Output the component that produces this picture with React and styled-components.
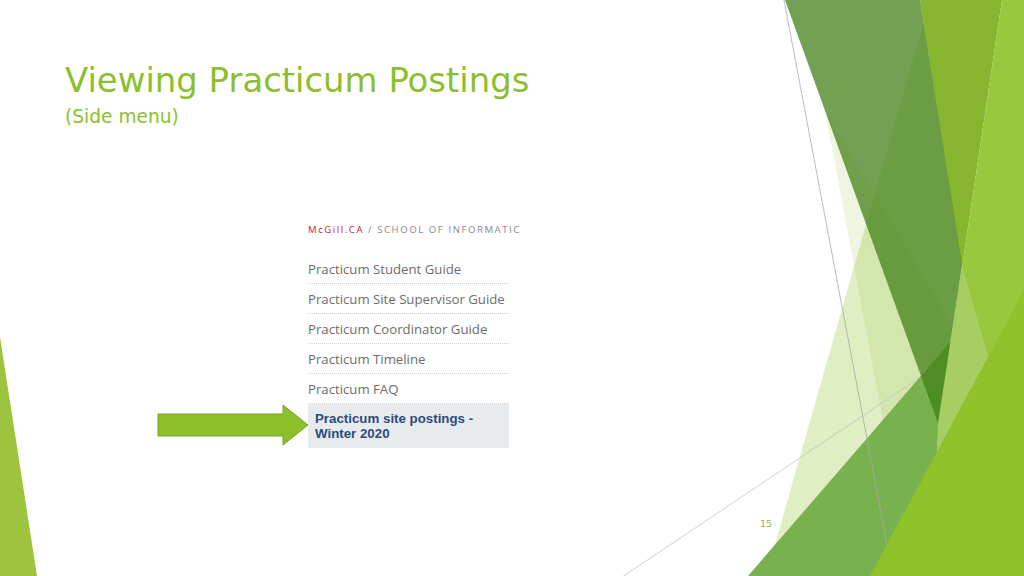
import React from "react";
import styled, { createGlobalStyle } from "styled-components";

const GlobalStyle = createGlobalStyle`
  html, body { margin: 0; padding: 0; background: #ffffff; }
  body { font-family: "DejaVu Sans", "Liberation Sans", sans-serif; }
`;

const Slide = styled.div`
  position: relative;
  width: 1024px;
  height: 576px;
  overflow: hidden;
  background: #ffffff;
  display: flex;
  flex-direction: column;
`;

const Backdrop = styled.svg`
  position: absolute;
  left: 0;
  top: 0;
  width: 1024px;
  height: 576px;
  z-index: 0;
  pointer-events: none;
`;

const Header = styled.header`
  position: relative;
  z-index: 1;
  padding: 61px 0 0 65px;
  color: #8cbf2f;
`;

const Title = styled.h1`
  margin: 0;
  font: 400 33.9px/40px "DejaVu Sans", sans-serif;
  white-space: nowrap;
`;

const Subtitle = styled.p`
  margin: 5px 0 0;
  font: 400 18.6px/22px "DejaVu Sans", sans-serif;
`;

const Figure = styled.div`
  position: relative;
  z-index: 1;
  display: flex;
  align-items: flex-end;
  padding-left: 157px;
  margin-top: 95px;
`;

const ArrowIcon = styled.svg`
  display: block;
  width: 152px;
  height: 42px;
  margin: 0 -1px 2px 0;
  flex: none;
`;

const Menu = styled.nav`
  width: 214px;
  font-family: "Open Sans", "DejaVu Sans", sans-serif;
`;

const Breadcrumb = styled.div`
  white-space: nowrap;
  font-size: 9.6px;
  line-height: 14px;
  letter-spacing: 1.55px;
  color: #8a8a8a;
  margin-bottom: 17px;
`;

const Home = styled.span`
  color: #c8202f;
`;

const List = styled.ul`
  list-style: none;
  margin: 0;
  padding: 0;
  width: 201px;
`;

const Item = styled.li`
  box-sizing: border-box;
  height: 30px;
  display: flex;
  align-items: center;
  font-size: 13.2px;
  line-height: 14px;
  color: #6d6d6d;
  border-bottom: 1px dotted #cfcfcf;
  white-space: nowrap;
`;

const ActiveItem = styled.li`
  display: flex;
  flex-direction: column;
  padding: 7px 7px 7px;
  background: #e8ebee;
  color: #2b4c7e;
  font-family: "Liberation Sans", "Open Sans", sans-serif;
  font-size: 13.3px;
  font-weight: 700;
  white-space: nowrap;
`;

const ActiveLine = styled.span`
  display: block;
  height: 15px;
  line-height: 15px;
`;

const PageNumber = styled.div`
  position: relative;
  z-index: 1;
  margin-top: auto;
  align-self: flex-end;
  margin-right: 252px;
  margin-bottom: 46px;
  font: 400 9.5px/12px "DejaVu Sans", sans-serif;
  color: #9fb23a;
`;

const items = [
  "Practicum Student Guide",
  "Practicum Site Supervisor Guide",
  "Practicum Coordinator Guide",
  "Practicum Timeline",
  "Practicum FAQ",
];

function Decoration() {
  return (
    <Backdrop viewBox="0 0 1024 576" aria-hidden="true">
      <polygon points="930,0 766,576 1000,576" fill="#90c226" fillOpacity="0.28" />
      <polygon points="825,110 892,470 955,330" fill="#90c226" fillOpacity="0.15" />
      <line x1="622" y1="577" x2="1024" y2="308" stroke="#c4c4c4" strokeWidth="0.8" />
      <polygon points="748,576 990,296 1024,330 1024,576" fill="#78b14d" />
      <polygon points="920,0 1002,0 962,268" fill="#87b52f" />
      <polygon points="1002,0 1024,0 1024,420 985,375 962,268" fill="#97c83d" />
      <polygon points="962,265 992,370 936,470 938,423" fill="#a6ce62" />
      <polygon points="785,0 920,0 962,265 938,423" fill="#3f7e15" fillOpacity="0.73" />
      <line x1="784" y1="0" x2="893" y2="576" stroke="#a8a8a8" strokeWidth="0.8" />
      <polygon points="870,576 1024,290 1024,576" fill="#8fc22b" />
      <polygon points="0,337 0,576 37,576" fill="#9dc33f" />
    </Backdrop>
  );
}

export default function App() {
  return (
    <>
      <GlobalStyle />
      <Slide>
        <Decoration />
        <Header>
          <Title>Viewing Practicum Postings</Title>
          <Subtitle>(Side menu)</Subtitle>
        </Header>
        <Figure>
          <ArrowIcon viewBox="0 0 152 42" aria-hidden="true">
            <polygon
              points="1,10 126,10 126,1 151,21 126,41 126,32 1,32"
              fill="#8cc02a"
              stroke="#76a324"
              strokeWidth="1"
            />
          </ArrowIcon>
          <Menu>
            <Breadcrumb>
              <Home>McGill.CA</Home> / SCHOOL OF INFORMATIC
            </Breadcrumb>
            <List>
              {items.map((t) => (
                <Item key={t}>{t}</Item>
              ))}
              <ActiveItem>
                <ActiveLine>Practicum site postings -</ActiveLine>
                <ActiveLine>Winter 2020</ActiveLine>
              </ActiveItem>
            </List>
          </Menu>
        </Figure>
        <PageNumber>15</PageNumber>
      </Slide>
    </>
  );
}
